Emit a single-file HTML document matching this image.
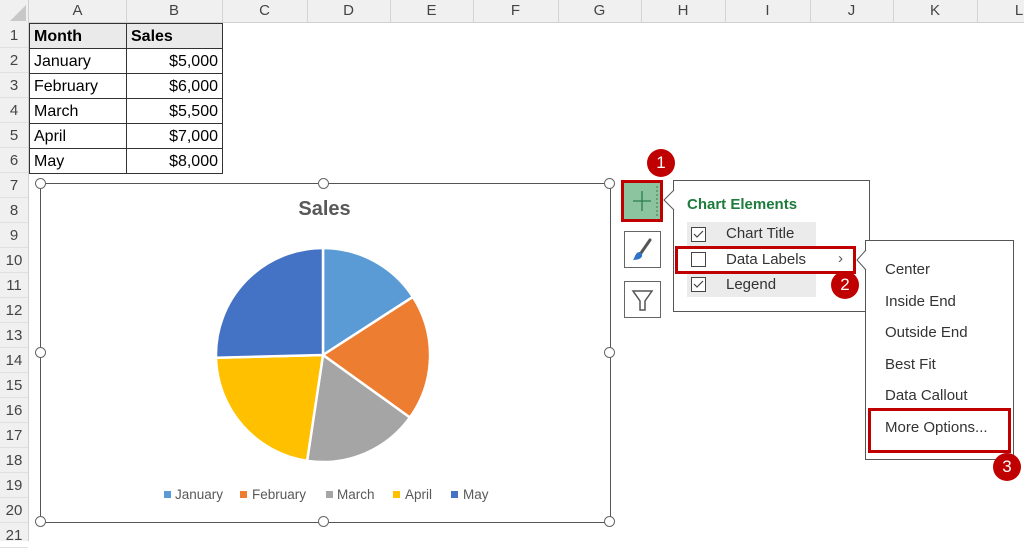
<!DOCTYPE html>
<html><head><meta charset="utf-8"><style>
body{margin:0;width:1024px;height:541px;overflow:hidden;background:#fff;font-family:"Liberation Sans",sans-serif;position:relative}
.a{position:absolute}
.ch{position:absolute;top:0;height:22px;line-height:22px;text-align:center;font-size:15px;color:#444;border-right:1px solid #d4d4d4}
.rh{position:absolute;left:0;width:28px;text-align:center;font-size:15px;color:#444;border-bottom:1px solid #e0e0e0}
.cell{position:absolute;height:26px;line-height:25px;font-size:16px;color:#000;box-sizing:border-box;border:1px solid #333;padding:0 4px}
.h{position:absolute;width:9px;height:9px;border:1.5px solid #666;border-radius:50%;background:#fff}
.badge{position:absolute;width:28px;height:28px;border-radius:50%;background:#c00000;color:#fff;font-size:17px;text-align:center;line-height:28px}
.mi{position:absolute;left:885px;font-size:15px;color:#333}
</style></head><body>
<div class="a" style="left:0;top:0;width:1024px;height:22px;background:#f0f0f0;border-bottom:1px solid #d0d0d0"></div>
<div class="a" style="left:0;top:0;width:28px;height:541px;background:#f0f0f0;border-right:1px solid #d0d0d0"></div>
<svg class="a" style="left:10px;top:5px" width="16" height="16"><polygon points="16,0 16,16 0,16" fill="#c8c8c8"/></svg>
<div class="ch" style="left:29px;width:97px">A</div>
<div class="ch" style="left:126px;width:96px">B</div>
<div class="ch" style="left:222px;width:85px">C</div>
<div class="ch" style="left:307px;width:83px">D</div>
<div class="ch" style="left:390px;width:83px">E</div>
<div class="ch" style="left:473px;width:85px">F</div>
<div class="ch" style="left:558px;width:83px">G</div>
<div class="ch" style="left:641px;width:84px">H</div>
<div class="ch" style="left:725px;width:85px">I</div>
<div class="ch" style="left:810px;width:83px">J</div>
<div class="ch" style="left:893px;width:84px">K</div>
<div class="ch" style="left:977px;width:84px">L</div>
<div class="rh" style="top:23px;height:24px;line-height:26px">1</div>
<div class="rh" style="top:48px;height:24px;line-height:26px">2</div>
<div class="rh" style="top:73px;height:24px;line-height:26px">3</div>
<div class="rh" style="top:98px;height:24px;line-height:26px">4</div>
<div class="rh" style="top:123px;height:24px;line-height:26px">5</div>
<div class="rh" style="top:148px;height:24px;line-height:26px">6</div>
<div class="rh" style="top:173px;height:24px;line-height:26px">7</div>
<div class="rh" style="top:198px;height:24px;line-height:26px">8</div>
<div class="rh" style="top:223px;height:24px;line-height:26px">9</div>
<div class="rh" style="top:248px;height:24px;line-height:26px">10</div>
<div class="rh" style="top:273px;height:24px;line-height:26px">11</div>
<div class="rh" style="top:298px;height:24px;line-height:26px">12</div>
<div class="rh" style="top:323px;height:24px;line-height:26px">13</div>
<div class="rh" style="top:348px;height:24px;line-height:26px">14</div>
<div class="rh" style="top:373px;height:24px;line-height:26px">15</div>
<div class="rh" style="top:398px;height:24px;line-height:26px">16</div>
<div class="rh" style="top:423px;height:24px;line-height:26px">17</div>
<div class="rh" style="top:448px;height:24px;line-height:26px">18</div>
<div class="rh" style="top:473px;height:24px;line-height:26px">19</div>
<div class="rh" style="top:498px;height:24px;line-height:26px">20</div>
<div class="rh" style="top:523px;height:24px;line-height:26px">21</div>

<div class="cell" style="left:29px;top:23px;width:98px;font-weight:bold;background:#eaeaea">Month</div>
<div class="cell" style="left:126px;top:23px;width:97px;font-weight:bold;background:#eaeaea">Sales</div>
<div class="cell" style="left:29px;top:48px;width:98px">January</div>
<div class="cell" style="left:126px;top:48px;width:97px;text-align:right">$5,000</div>
<div class="cell" style="left:29px;top:73px;width:98px">February</div>
<div class="cell" style="left:126px;top:73px;width:97px;text-align:right">$6,000</div>
<div class="cell" style="left:29px;top:98px;width:98px">March</div>
<div class="cell" style="left:126px;top:98px;width:97px;text-align:right">$5,500</div>
<div class="cell" style="left:29px;top:123px;width:98px">April</div>
<div class="cell" style="left:126px;top:123px;width:97px;text-align:right">$7,000</div>
<div class="cell" style="left:29px;top:148px;width:98px">May</div>
<div class="cell" style="left:126px;top:148px;width:97px;text-align:right">$8,000</div>

<div class="a" style="left:40px;top:183px;width:569px;height:338px;border:1px solid #555;background:#fff"></div>
<div class="a" style="left:40px;top:198px;width:569px;text-align:center;font-size:20px;font-weight:bold;color:#595959">Sales</div>
<svg class="a" style="left:0;top:0" width="1024" height="541">
<g stroke="#fff" stroke-width="2.5" stroke-linejoin="round">
<path d="M323,355 L323,248 A107,107 0 0 1 412.9,296.9 Z" fill="#5b9bd5"/>
<path d="M323,355 L412.9,296.9 A107,107 0 0 1 409.9,417.5 Z" fill="#ed7d31"/>
<path d="M323,355 L409.9,417.5 A107,107 0 0 1 307.1,460.8 Z" fill="#a5a5a5"/>
<path d="M323,355 L307.1,460.8 A107,107 0 0 1 216,357.7 Z" fill="#ffc000"/>
<path d="M323,355 L216,357.7 A107,107 0 0 1 323,248 Z" fill="#4472c4"/>
</g>
<g font-family="Liberation Sans, sans-serif" font-size="13.5" fill="#595959">
<rect x="164" y="491" width="7" height="7" fill="#5b9bd5"/><text x="175" y="499">January</text>
<rect x="240" y="491" width="7" height="7" fill="#ed7d31"/><text x="252" y="499">February</text>
<rect x="326" y="491" width="7" height="7" fill="#a5a5a5"/><text x="337" y="499">March</text>
<rect x="393" y="491" width="7" height="7" fill="#ffc000"/><text x="405" y="499">April</text>
<rect x="451" y="491" width="7" height="7" fill="#4472c4"/><text x="463" y="499">May</text>
</g>
</svg>
<div class="h" style="left:35px;top:178px"></div>
<div class="h" style="left:318px;top:178px"></div>
<div class="h" style="left:604px;top:178px"></div>
<div class="h" style="left:35px;top:347px"></div>
<div class="h" style="left:604px;top:347px"></div>
<div class="h" style="left:35px;top:516px"></div>
<div class="h" style="left:318px;top:516px"></div>
<div class="h" style="left:604px;top:516px"></div>

<div class="a" style="left:621px;top:180px;width:36px;height:36px;border:3px solid #c00000;background:#8bc49e"></div>
<svg class="a" style="left:624px;top:183px" width="36" height="36"><path d="M18,8 V28 M9,18 H27" stroke="#2e7d4f" stroke-width="1.3"/><path d="M33,3 V33" stroke="#3a7a50" stroke-dasharray="2,2"/></svg>
<div class="a" style="left:624px;top:231px;width:35px;height:35px;border:1px solid #666;background:#fff"></div>
<svg class="a" style="left:625px;top:232px" width="35" height="35"><path d="M25,8 L16,21" stroke="#555" stroke-width="3" stroke-linecap="round"/><path d="M15,20 C10,20 10,26 8,28 C14,28 18,26 17,22 Z" fill="#2f73c9"/></svg>
<div class="a" style="left:624px;top:281px;width:35px;height:35px;border:1px solid #666;background:#fff"></div>
<svg class="a" style="left:625px;top:282px" width="35" height="35"><path d="M8,9 H27 L20,19 V28 H15 V19 Z" fill="none" stroke="#555" stroke-width="1.5"/></svg>
<div class="badge" style="left:647px;top:149px">1</div>

<div class="a" style="left:673px;top:180px;width:195px;height:130px;border:1px solid #555;background:#fff"></div>
<svg class="a" style="left:663px;top:190px" width="12" height="22"><path d="M11,0 L1,10 L11,20" fill="#fff" stroke="#555"/></svg>
<div class="a" style="left:687px;top:196px;font-size:15px;font-weight:bold;color:#1e7b3c">Chart Elements</div>
<div class="a" style="left:687px;top:222px;width:129px;height:75px;background:#ebebeb"></div>
<div class="a" style="left:691px;top:227px;width:13px;height:13px;border:1px solid #444;background:#fff"></div>
<svg class="a" style="left:692px;top:228px" width="13" height="13"><path d="M2,6 L5,9 L11,3" fill="none" stroke="#444" stroke-width="1.2"/></svg>
<div class="a" style="left:726px;top:225px;font-size:15px;color:#333">Chart Title</div>
<div class="a" style="left:676px;top:247px;width:178px;height:25px;background:#fff"></div>
<div class="a" style="left:691px;top:252px;width:13px;height:13px;border:1px solid #444;background:#fff"></div>
<div class="a" style="left:726px;top:251px;font-size:15px;color:#333">Data Labels</div>
<div class="a" style="left:838px;top:250px;font-size:15px;color:#555">&#8250;</div>
<div class="a" style="left:691px;top:277px;width:13px;height:13px;border:1px solid #444;background:#fff"></div>
<svg class="a" style="left:692px;top:278px" width="13" height="13"><path d="M2,6 L5,9 L11,3" fill="none" stroke="#444" stroke-width="1.2"/></svg>
<div class="a" style="left:726px;top:276px;font-size:15px;color:#333">Legend</div>
<div class="a" style="left:675px;top:246px;width:175px;height:22px;border:3px solid #c00000"></div>

<div class="a" style="left:865px;top:240px;width:147px;height:218px;border:1px solid #555;background:#fff"></div>
<svg class="a" style="left:856px;top:250px" width="11" height="22"><path d="M10,0 L1,10 L10,20" fill="#fff" stroke="#555"/></svg>
<div class="badge" style="left:831px;top:271px">2</div>
<div class="mi" style="top:261px">Center</div>
<div class="mi" style="top:293px">Inside End</div>
<div class="mi" style="top:324px">Outside End</div>
<div class="mi" style="top:356px">Best Fit</div>
<div class="mi" style="top:387px">Data Callout</div>
<div class="mi" style="top:419px">More Options...</div>
<div class="a" style="left:868px;top:408px;width:137px;height:39px;border:3px solid #c00000"></div>
<div class="badge" style="left:993px;top:453px">3</div>
</body></html>
